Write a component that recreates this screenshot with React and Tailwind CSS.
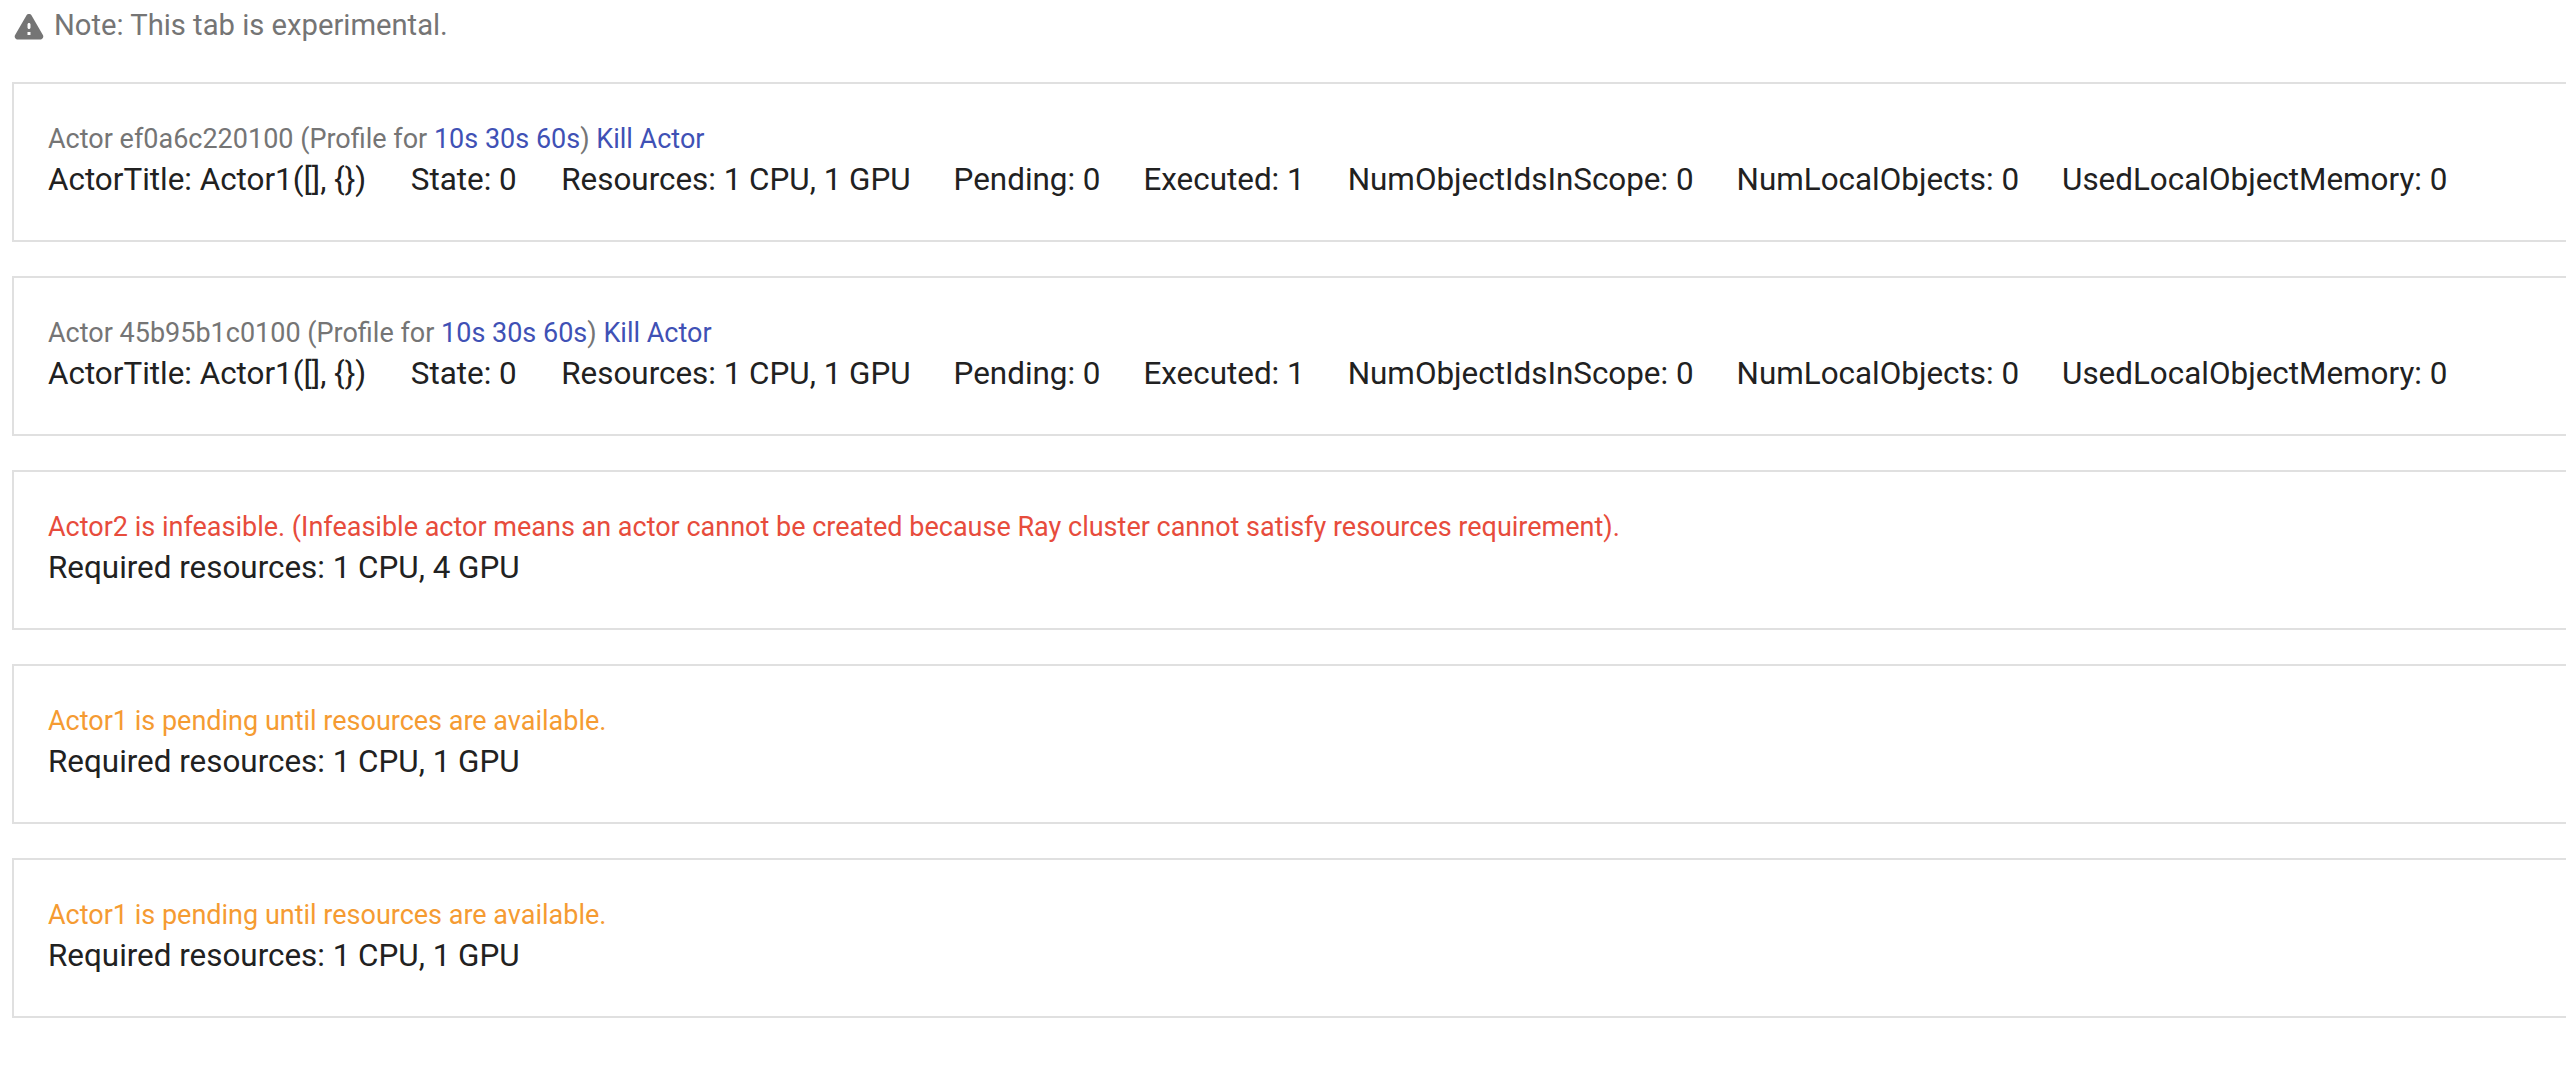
import React from 'react';

const actors = [
  { id: 'ef0a6c220100' },
  { id: '45b95b1c0100' },
];

const stats = [
  'ActorTitle: Actor1([], {})',
  'State: 0',
  'Resources: 1 CPU, 1 GPU',
  'Pending: 0',
  'Executed: 1',
  'NumObjectIdsInScope: 0',
  'NumLocalObjects: 0',
  'UsedLocalObjectMemory: 0',
];

const Card = ({ children }) => (
  <div className="mb-[34px] h-[160px] w-[2600px] border-2 border-[#e0e0e0] bg-white pl-[34px] pt-[35px]">
    {children}
  </div>
);

const Required = ({ children }) => (
  <div className="text-[31.4px] leading-[40px] text-[#212121]">Required resources: {children}</div>
);

const App = () => {
  return (
    <div className="h-[1066px] overflow-hidden bg-white font-['Roboto',sans-serif]">
      <div className="flex h-[52px] items-center pl-[11px] text-[29.2px] text-[#757575]">
        <svg viewBox="0 0 24 24" className="mr-[7px] h-[36px] w-[36px] fill-[#757575]">
          <path d="M4.47 21h15.06c1.54 0 2.5-1.67 1.73-3L13.73 4.99c-.77-1.33-2.69-1.33-3.46 0L2.74 18c-.77 1.33.19 3 1.73 3zM12 14c-.55 0-1-.45-1-1v-2c0-.55.45-1 1-1s1 .45 1 1v2c0 .55-.45 1-1 1zm1 4h-2v-2h2v2z" />
        </svg>
        Note: This tab is experimental.
      </div>
      <div className="ml-[12px] mt-[30px]">
        {actors.map((actor) => (
          <Card key={actor.id}>
            <div className="text-[27px] leading-[41px] text-[#757575]">
              Actor {actor.id} (Profile for <span className="text-[#3f51b5]">10s 30s 60s</span>) <span className="text-[#3f51b5]">Kill Actor</span>
            </div>
            <div className="flex gap-[43px] text-[31.4px] leading-[40px] text-[#212121]">
              {stats.map((s, i) => (
                <span key={s} className={i < 2 ? 'mr-[1.5px]' : ''}>{s}</span>
              ))}
            </div>
          </Card>
        ))}
        <Card>
          <div className="text-[27px] leading-[41px] text-[#e74c3c]">
            Actor2 is infeasible. (Infeasible actor means an actor cannot be created because Ray cluster cannot satisfy resources requirement).
          </div>
          <Required>1 CPU, 4 GPU</Required>
        </Card>
        <Card>
          <div className="text-[27px] leading-[41px] text-[#f59b32]">Actor1 is pending until resources are available.</div>
          <Required>1 CPU, 1 GPU</Required>
        </Card>
        <Card>
          <div className="text-[27px] leading-[41px] text-[#f59b32]">Actor1 is pending until resources are available.</div>
          <Required>1 CPU, 1 GPU</Required>
        </Card>
      </div>
    </div>
  );
};

export default App;
